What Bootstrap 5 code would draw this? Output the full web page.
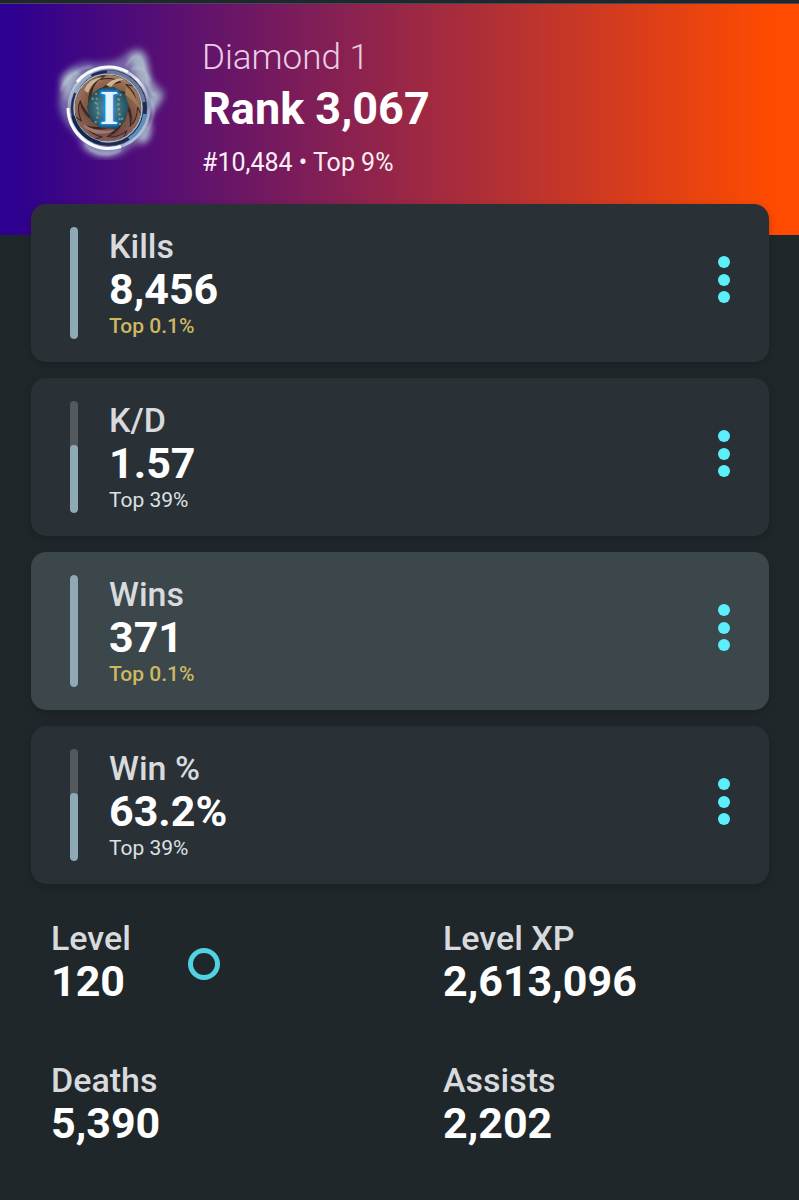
<!DOCTYPE html>
<html lang="en">
<head>
<meta charset="utf-8">
<meta name="viewport" content="width=device-width, initial-scale=1">
<title>Player stats</title>
<link href="https://cdn.jsdelivr.net/npm/bootstrap@5.3.0/dist/css/bootstrap.min.css" rel="stylesheet">
<style>
body { background: #20272a; color: #fff; font-family: Roboto, sans-serif; min-height: 100vh; }
.hero { border-top: 1px solid #46495a; margin-top: 3px; padding: 32px 32px 57px 49px; gap: 29px;
  background: linear-gradient(90deg, #2c0091 1%, #ff4b00 97%); }
.emblem { width: 124px; height: 124px; }
.hero-text { padding-top: 2px; }
.tier { font-size: 35px; line-height: 40px; font-weight: 300; color: #eacde5; }
.rank-title { font-size: 45px; line-height: 62px; font-weight: 700; }
.standing { font-size: 25px; line-height: 38px; padding-top: 4px; color: #fbeef5; }
.hero-text { margin-bottom: -4px; }
.stat-list { margin-top: -31px; padding: 0 30px 0 31px; }
.stat-card { background: #293136; border-radius: 15px; padding: 23px 32px 23px 39px; box-shadow: 0 3px 8px rgba(0,0,0,.2); }
.stat-card.current { background: #3b474b; }
.meter { width: 8px; height: 112px; border-radius: 4px; background: #53595c; overflow: hidden; margin-right: 31px; }
.meter-fill { background: #8fa9b7; border-radius: 4px; }
.stat-label { font-size: 34px; line-height: 38px; font-weight: 500; color: #d9dadd; }
.stat-value { font-size: 43px; line-height: 48px; font-weight: 700; }
.stat-top { font-size: 21px; line-height: 26px; color: #dfe1e3; }
.gold { color: #cdb762; font-weight: 500; }
.more { color: #5ceffb; padding: 0 7px 7px; line-height: 0; }
.totals { padding: 35px 12px 53px 51px; }
.totals dl { row-gap: 56px; }
.ring { width: 32px; height: 32px; border: 5px solid #50d2e2; margin-left: 57px; margin-top: 3px; }
</style>
</head>
<body>
<header class="hero d-flex align-items-start">
  <svg class="emblem flex-shrink-0" viewBox="0 0 124 124" role="img" aria-label="Diamond 1 emblem">
    <defs>
      <filter id="soft" x="-30%" y="-30%" width="160%" height="160%"><feGaussianBlur stdDeviation="3"/></filter>
      <filter id="fine" x="-30%" y="-30%" width="160%" height="160%"><feGaussianBlur stdDeviation="1"/></filter>
      <linearGradient id="rim" x1="0" y1="0" x2="1" y2="1">
        <stop offset="0" stop-color="#f5faff"/><stop offset=".28" stop-color="#8795ad"/><stop offset=".5" stop-color="#e8eef7"/><stop offset=".72" stop-color="#7f97b5"/><stop offset="1" stop-color="#e9f4ff"/>
      </linearGradient>
      <linearGradient id="blade" x1="0" y1="0" x2="1" y2="1">
        <stop offset="0" stop-color="#d2ab86"/><stop offset=".5" stop-color="#8d5d44"/><stop offset="1" stop-color="#4a2a2a"/>
      </linearGradient>
      <linearGradient id="shade" x1="0" y1="0" x2="0" y2="1">
        <stop offset="0" stop-color="#2c1a14" stop-opacity=".1"/><stop offset="1" stop-color="#40203a" stop-opacity=".45"/>
      </linearGradient>
      <radialGradient id="core"><stop offset="0" stop-color="#4b8fa5"/><stop offset=".6" stop-color="#3c6c78"/><stop offset="1" stop-color="#214a58"/></radialGradient>
      <clipPath id="disc"><circle cx="59" cy="72" r="33"/></clipPath>
    </defs>
    <g filter="url(#soft)" fill="#7f79ae">
      <path d="M12 42 Q20 28 39 26 Q66 30 79 16 Q91 7 98 20 Q101 35 103 44 Q113 51 116 58 Q112 70 102 79 Q106 101 94 108 Q82 108 75 117 Q55 126 36 113 Q29 99 20 91 Q8 76 10 61Z" opacity=".8"/>
      <path d="M80 21 Q95 10 98 28 L104 54 L91 49Z M101 51 L113 60 L100 82Z M12 43 Q21 31 32 35 L17 68Z" fill="#a5b0c5"/>
      <path d="M31 106 Q49 119 73 112 Q58 128 37 114Z M88 100 L101 86 Q105 102 94 108Z" fill="#a9b5cd"/>
    </g>
    <g fill="none" stroke="#c6d7dd" stroke-width="1.5" opacity=".55" filter="url(#fine)">
      <path d="M77 30 Q91 8 96 35 T107 58 M15 50 Q26 31 43 31 M100 63 Q110 73 98 94 M36 108 Q50 125 72 114 M82 34 Q94 26 101 45 M12 55 Q16 38 30 37"/>
    </g>
    <circle cx="60" cy="72" r="38" fill="#212a50"/>
    <circle cx="60" cy="72" r="40" fill="none" stroke="url(#rim)" stroke-width="3"/>
    <circle cx="59" cy="72" r="34" fill="none" stroke="#a9b9d0" stroke-width="1.6"/>
    <g fill="none" stroke-width="3.5">
      <path d="M26 57 A36.5 36.5 0 0 1 42 39" stroke="#9aa6bc"/>
      <path d="M58 36 A36.5 36.5 0 0 1 95 66" stroke="#707a97"/>
      <path d="M96 78 A36.5 36.5 0 0 1 80 103" stroke="#5c91be"/>
      <path d="M24 80 A36.5 36.5 0 0 0 51 107" stroke="#15264b"/>
    </g>
    <path d="M19 72 A40.5 40.5 0 0 0 72 110.500 M28 46 A40.5 40.5 0 0 1 79 36" fill="none" stroke="#f5faff" stroke-width="3"/>
    <g clip-path="url(#disc)">
      <circle cx="59" cy="72" r="34" fill="#4c3028"/>
      <g stroke="#3b241f" stroke-width="1">
        <path id="b" d="M32 52 Q44 34 72 39 L82 48 Q62 43 51 54 L42 70 Q40 57 47 46 Q38 48 32 60Z" fill="url(#blade)"/>
        <use href="#b" transform="rotate(51 59 72)"/><use href="#b" transform="rotate(103 59 72)"/><use href="#b" transform="rotate(154 59 72)"/><use href="#b" transform="rotate(206 59 72)"/><use href="#b" transform="rotate(257 59 72)"/><use href="#b" transform="rotate(309 59 72)"/>
      </g>
      <path d="M35 54 Q40 42 54 41 Q43 46 39 57Z M57 49 Q65 41 76 43 Q66 45 62 51Z" fill="#e6cda9"/>
      <path d="M77 51 Q87 58 91 73 Q82 62 76 59Z" fill="#c39567"/>
      <circle cx="59" cy="72" r="33" fill="url(#shade)"/>
      <path d="M35 88 Q46 97 66 94 Q49 103 35 91Z" fill="#a07a72"/>
    </g>
    <path d="M51 52 L65 51 L76 58 L80 71 L76 85 L67 93 L52 92 L42 85 L38 71 L42 59Z" fill="url(#core)"/>
    <path d="M43 62 Q53 73 46 88 M72 58 Q65 74 75 85 M47 57 L50 82 M69 57 L71 89" stroke="#6c9994" stroke-width="2" stroke-dasharray="2 3" fill="none"/>
    <text x="60" y="88" text-anchor="middle" font-family="Liberation Serif, serif" font-weight="700" font-size="48" fill="#249dff" stroke="#168cff" stroke-width="3" filter="url(#fine)" aria-hidden="true">I</text>
    <text x="60" y="88" text-anchor="middle" font-family="Liberation Serif, serif" font-weight="700" font-size="48" fill="#e3f3ff">I</text>
  </svg>
  <div class="hero-text">
    <div class="tier">Diamond 1</div>
    <h1 class="rank-title m-0">Rank 3,067</h1>
    <div class="standing">#10,484 • Top 9%</div>
  </div>
</header>

<main>
  <section class="stat-list d-flex flex-column gap-3 position-relative" aria-label="Ranked stats">
    <article class="stat-card d-flex align-items-center">
      <div class="meter d-flex flex-column justify-content-end flex-shrink-0"><div class="meter-fill" style="height:100%"></div></div>
      <div class="flex-grow-1"><div class="stat-label">Kills</div><div class="stat-value">8,456</div><div class="stat-top gold">Top 0.1%</div></div>
      <button type="button" class="btn border-0 more" aria-label="More about Kills"><svg width="12" height="48" viewBox="0 0 12 48" fill="currentColor"><circle cx="6" cy="6" r="6"/><circle cx="6" cy="24" r="6"/><circle cx="6" cy="41" r="6"/></svg></button>
    </article>
    <article class="stat-card d-flex align-items-center">
      <div class="meter d-flex flex-column justify-content-end flex-shrink-0"><div class="meter-fill" style="height:61%"></div></div>
      <div class="flex-grow-1"><div class="stat-label">K/D</div><div class="stat-value">1.57</div><div class="stat-top">Top 39%</div></div>
      <button type="button" class="btn border-0 more" aria-label="More about K/D"><svg width="12" height="48" viewBox="0 0 12 48" fill="currentColor"><circle cx="6" cy="6" r="6"/><circle cx="6" cy="24" r="6"/><circle cx="6" cy="41" r="6"/></svg></button>
    </article>
    <article class="stat-card current d-flex align-items-center">
      <div class="meter d-flex flex-column justify-content-end flex-shrink-0"><div class="meter-fill" style="height:100%"></div></div>
      <div class="flex-grow-1"><div class="stat-label">Wins</div><div class="stat-value">371</div><div class="stat-top gold">Top 0.1%</div></div>
      <button type="button" class="btn border-0 more" aria-label="More about Wins"><svg width="12" height="48" viewBox="0 0 12 48" fill="currentColor"><circle cx="6" cy="6" r="6"/><circle cx="6" cy="24" r="6"/><circle cx="6" cy="41" r="6"/></svg></button>
    </article>
    <article class="stat-card d-flex align-items-center">
      <div class="meter d-flex flex-column justify-content-end flex-shrink-0"><div class="meter-fill" style="height:61%"></div></div>
      <div class="flex-grow-1"><div class="stat-label">Win %</div><div class="stat-value">63.2%</div><div class="stat-top">Top 39%</div></div>
      <button type="button" class="btn border-0 more" aria-label="More about Win %"><svg width="12" height="48" viewBox="0 0 12 48" fill="currentColor"><circle cx="6" cy="6" r="6"/><circle cx="6" cy="24" r="6"/><circle cx="6" cy="41" r="6"/></svg></button>
    </article>
  </section>

  <section class="totals" aria-label="Totals">
    <dl class="row gx-4 m-0">
      <div class="col-6 p-0 d-flex align-items-center">
        <div><dt class="stat-label">Level</dt><dd class="stat-value m-0">120</dd></div>
        <span class="ring rounded-circle"></span>
      </div>
      <div class="col-6 ps-4 pe-0"><dt class="stat-label">Level XP</dt><dd class="stat-value m-0">2,613,096</dd></div>
      <div class="col-6 p-0"><dt class="stat-label">Deaths</dt><dd class="stat-value m-0">5,390</dd></div>
      <div class="col-6 ps-4 pe-0"><dt class="stat-label">Assists</dt><dd class="stat-value m-0">2,202</dd></div>
    </dl>
  </section>
</main>
<script src="https://cdn.jsdelivr.net/npm/bootstrap@5.3.0/dist/js/bootstrap.bundle.min.js"></script>
</body>
</html>
